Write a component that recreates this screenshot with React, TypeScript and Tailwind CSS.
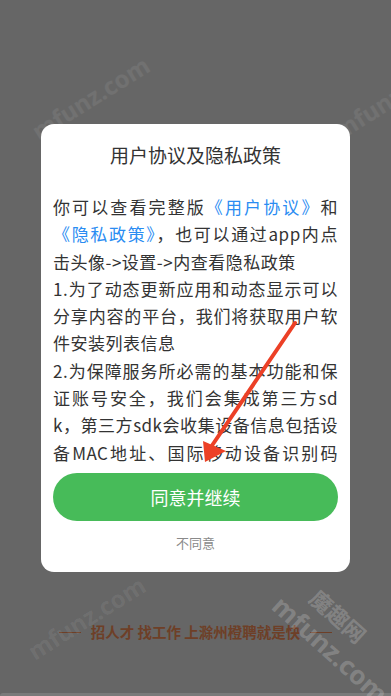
import React from 'react';

const FONT = { fontFamily: '"Noto Sans CJK SC", "Noto Sans", sans-serif' };

function Link({ children }: { children: React.ReactNode }) {
  return <span className="text-[#2a8cf2]">{children}</span>;
}

// last: true marks the final line of a paragraph (not stretched)
const lines: { node: React.ReactNode; last?: boolean }[] = [
  { node: <>你可以查看完整版<Link>《用户协议》</Link>和</> },
  { node: <><Link>《隐私政策》</Link>，也可以通过app内点</> },
  { node: <>击头像-&gt;设置-&gt;内查看隐私政策</>, last: true },
  { node: <>1.为了动态更新应用和动态显示可以</> },
  { node: <>分享内容的平台，我们将获取用户软</> },
  { node: <>件安装列表信息</>, last: true },
  { node: <>2.为保障服务所必需的基本功能和保</> },
  { node: <>证账号安全，我们会集成第三方sd</> },
  { node: <>k，第三方sdk会收集设备信息包括设</> },
  { node: <>备MAC地址、国际移动设备识别码</> },
];

function Watermark({ className, text }: { className: string; text: string }) {
  return (
    <div
      className={`pointer-events-none absolute whitespace-nowrap font-bold ${className}`}
      style={{ fontFamily: '"Noto Sans", "Noto Sans CJK SC", sans-serif' }}
    >
      {text}
    </div>
  );
}

export default function App() {
  return (
    <div className="relative h-[696px] w-[391px] overflow-hidden bg-[#666666]" style={FONT}>
      <div className="flex h-full flex-col">
        {/* Dialog */}
        <div className="mx-[41px] mt-[124px] flex flex-col rounded-[13px] bg-white px-[12px] pb-[20px] pt-[17px]">
          <h2 className="text-center text-[19px] leading-[27px] text-[#333333]">用户协议及隐私政策</h2>

          <div className="mt-[25px] h-[274px] overflow-hidden text-[17px] leading-[27.3px] tracking-[0.5px] text-[#333333]">
            {lines.map((l, i) => (
              <div
                key={i}
                className={l.last ? 'whitespace-nowrap' : 'text-justify [text-align-last:justify] whitespace-nowrap'}
              >
                {l.node}
              </div>
            ))}
          </div>

          <button className="mt-[6px] h-[48px] w-full rounded-full bg-[#47bb59] text-[18px] text-white">
            同意并继续
          </button>
          <div className="mt-[13px] text-center text-[13px] leading-[18px] text-[#8a8a8a]">不同意</div>
        </div>

        {/* Tagline */}
        <div className="mt-[50px] flex items-center justify-center gap-[10px]">
          <div className="h-px w-[22px] bg-[#6e3f27]" />
          <span className="text-[14.5px] font-bold leading-[20px] text-[#6e3f27]">
            招人才 找工作 上滁州橙聘就是快
          </span>
          <div className="h-px w-[22px] bg-[#6e3f27]" />
        </div>

        <div className="mt-auto h-[3px] rounded-tl-[4px] bg-[#7a7a7a]" />
      </div>

      {/* Annotation arrow */}
      <svg className="pointer-events-none absolute left-0 top-0" width="391" height="696">
        <line x1="295" y1="323" x2="211" y2="447" stroke="#ec4026" strokeWidth="4" strokeLinecap="round" />
        <polygon points="205,462 203,441 226,451" fill="#ec4026" />
      </svg>

      {/* Watermarks */}
      <Watermark className="left-[24px] top-[80px] -rotate-[32deg] text-[24px] text-white/[0.07]" text="mfunz.com" />
      <Watermark className="left-[330px] top-[95px] -rotate-[32deg] text-[24px] text-white/[0.07]" text="mfunz" />
      <Watermark className="left-[20px] top-[600px] -rotate-[32deg] text-[24px] text-white/[0.08]" text="mfunz.com" />
      <Watermark className="left-[258px] top-[630px] rotate-[42deg] text-[26px] text-white/20" text="mfunz.com" />
      <Watermark className="left-[305px] top-[600px] rotate-[42deg] text-[22px] text-white/20" text="魔趣网" />
    </div>
  );
}
